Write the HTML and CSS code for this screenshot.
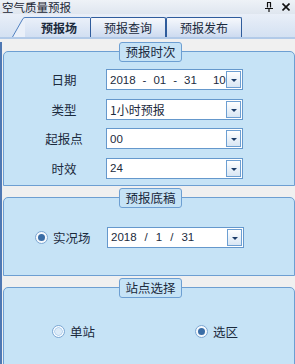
FILE: index.html
```html
<!DOCTYPE html>
<html lang="zh-CN">
<head>
    <meta charset="UTF-8">
    <meta name="viewport" content="width=device-width, initial-scale=1.0">
    <title>空气质量预报</title>
    <link rel="stylesheet" href="styles.css">
</head>
<body>
    <div class="window">
        <div class="titlebar">
            <span class="title">空气质量预报</span>
            <span class="tools">
                <svg class="pin" width="8" height="10" viewBox="0 0 8 10">
                    <path d="M2 0.5h4M2.5 0.5v5M5.5 0.5v5M0 6.5h8M4 6.5v3.5" stroke="#111" stroke-width="1.2" fill="none"/>
                </svg>
                <svg class="close" width="8" height="8" viewBox="0 0 8 8">
                    <path d="M0.5 0.5l7 7M7.5 0.5l-7 7" stroke="#111" stroke-width="1.6" fill="none"/>
                </svg>
            </span>
        </div>

        <div class="tabstrip">
            <div class="tab tab-active">
                <svg class="slant" width="13" height="20" viewBox="0 0 13 20">
                    <path d="M0 20L11 1.5Q12 0.5 13 0.5V20Z" fill="#eaf0f9"/>
                    <path d="M0.5 20L11 1.5Q12 0.5 13 0.5" stroke="#4f7fbf" fill="none"/>
                </svg>
                <span class="tab-body">预报场</span>
            </div>
            <div class="tab">预报查询</div>
            <div class="tab">预报发布</div>
        </div>

        <div class="content">
            <div class="group">
                <div class="legend">预报时次</div>
                <div class="panel panel-times">
                    <div class="form-grid">
                        <label>日期</label>
                        <div class="combo">
                            <span class="value date">
                                <span>2018</span><span>-</span><span>01</span><span>-</span><span>31</span><span class="hour">10</span>
                            </span>
                            <span class="drop"></span>
                        </div>

                        <label>类型</label>
                        <div class="combo">
                            <span class="value">1小时预报</span>
                            <span class="drop"></span>
                        </div>

                        <label>起报点</label>
                        <div class="combo">
                            <span class="value num">00</span>
                            <span class="drop"></span>
                        </div>

                        <label>时效</label>
                        <div class="combo">
                            <span class="value num">24</span>
                            <span class="drop"></span>
                        </div>
                    </div>
                </div>
            </div>

            <div class="group">
                <div class="legend">预报底稿</div>
                <div class="panel panel-base">
                    <div class="radio-item radio-wide">
                        <span class="radio checked"></span>
                        <span>实况场</span>
                    </div>
                    <div class="combo combo-short">
                        <span class="value date date-slash">
                            <span>2018</span><span>/</span><span>1</span><span>/</span><span>31</span>
                        </span>
                        <span class="drop"></span>
                    </div>
                </div>
            </div>

            <div class="group">
                <div class="legend">站点选择</div>
                <div class="panel panel-sites">
                    <div class="radio-item radio-site">
                        <span class="radio"></span>
                        <span>单站</span>
                    </div>
                    <div class="radio-item">
                        <span class="radio checked"></span>
                        <span>选区</span>
                    </div>
                </div>
            </div>
        </div>
    </div>
</body>
</html>
```

FILE: styles.css
```css
/* docked tool window */
body {
    margin: 0;
    font-family: "Noto Sans CJK SC", "Noto Sans", sans-serif;
    font-size: 12px;
    color: #1b2a3d;
    background-color: #f0f0f0;
    overflow: hidden;
}

.window {
    width: 295px;
    height: 364px;
    overflow: hidden;
}

.titlebar {
    height: 14px;
    display: flex;
    align-items: center;
    justify-content: space-between;
    padding: 0 5px 0 2px;
    background: linear-gradient(#eef2f7, #dfe6ef);
}

.title {
    font-size: 11.5px;
    line-height: 14px;
    color: #1a2634;
}

.tools {
    display: flex;
    align-items: center;
    gap: 9px;
}

.tabstrip {
    height: 23px;
    display: flex;
    align-items: flex-end;
    padding-left: 12px;
    background: linear-gradient(#e9eff8, #d4e1f2);
    border-bottom: 2px solid #b2cae8;
}

.tab {
    height: 19px;
    width: 74px;
    display: flex;
    align-items: center;
    justify-content: center;
    border: 1px solid #2f5c9c;
    border-bottom: none;
    border-radius: 2px 2px 0 0;
    background: linear-gradient(#f6f8fc, #cddbf0);
    line-height: 19px;
}

.tab-active {
    width: auto;
    border: none;
    background: none;
    align-items: stretch;
    height: 20px;
}

.slant {
    display: block;
}

.tab-body {
    width: 62px;
    padding-left: 3px;
    text-align: center;
    font-weight: bold;
    line-height: 19px;
    border-top: 1px solid #4f7fbf;
    background: linear-gradient(#eaf0f9, #d2dff2);
}

.content {
    border-left: 2px solid #4f78b3;
    height: 325px;
}

.group .legend {
    position: relative;
    z-index: 1;
    width: 63px;
    height: 20px;
    box-sizing: border-box;
    margin: 2px 0 -11px 117px;
    border: 1px solid #6d9fd2;
    border-radius: 3px;
    background-color: #c6e3f6;
    text-align: center;
    line-height: 18px;
    font-size: 12.5px;
}

.group:first-child .legend {
    margin-top: 3px;
}

.panel {
    margin: 0 0 0 1px;
    width: 292px;
    box-sizing: border-box;
    border: 1px solid #6d9fd2;
    border-radius: 5px 5px 0 0;
    background-color: #c6e3f6;
}

.panel-times {
    padding: 17px 0 6px 18px;
}

.form-grid {
    display: grid;
    grid-template-columns: 84px 137px;
    grid-auto-rows: 21px;
    row-gap: 8.5px;
    align-items: center;
}

.form-grid label {
    text-align: center;
    font-size: 12.5px;
}

.combo {
    height: 21px;
    width: 137px;
    box-sizing: border-box;
    display: flex;
    align-items: center;
    justify-content: space-between;
    border: 1px solid #6598cc;
    background-color: #ffffff;
    padding: 0 1px 0 3px;
}

.value {
    white-space: nowrap;
}

.num,
.date {
    font-family: "Liberation Sans", Arial, sans-serif;
    font-size: 11.5px;
}

.date {
    display: flex;
    gap: 7px;
}

.date .hour {
    margin-left: 9px;
}

.date-slash {
    gap: 8px;
}

.drop {
    width: 15px;
    height: 17px;
    box-sizing: border-box;
    border: 1px solid #6d9fd2;
    background: linear-gradient(#ffffff, #d8e6f4);
    display: flex;
    align-items: center;
    justify-content: center;
}

.drop::after {
    content: "";
    border-top: 3px solid #1c3c68;
    border-left: 3px solid transparent;
    border-right: 3px solid transparent;
    margin-top: 2px;
}

.panel-base {
    display: flex;
    align-items: center;
    padding: 29px 0 27px 31px;
}

.combo-short {
    height: 21px;
}

.radio-item {
    display: flex;
    align-items: center;
    gap: 5px;
    font-size: 12.5px;
}

.radio-wide {
    width: 72px;
}

.radio {
    width: 13px;
    height: 13px;
    box-sizing: border-box;
    border-radius: 50%;
    border: 1px solid #7ca7d3;
    background: radial-gradient(circle, #dcebf8 0 3px, #b9d5ef 3.5px 4px, #f7fbff 4.5px);
    display: flex;
    align-items: center;
    justify-content: center;
}

.radio.checked {
    background: #f5f9fd;
}

.radio.checked::after {
    content: "";
    width: 7px;
    height: 7px;
    border-radius: 50%;
    background-color: #3a6da6;
}

.panel-sites {
    display: flex;
    align-items: center;
    padding: 34px 0 40px 48px;
}

.radio-site {
    width: 143px;
}
```
